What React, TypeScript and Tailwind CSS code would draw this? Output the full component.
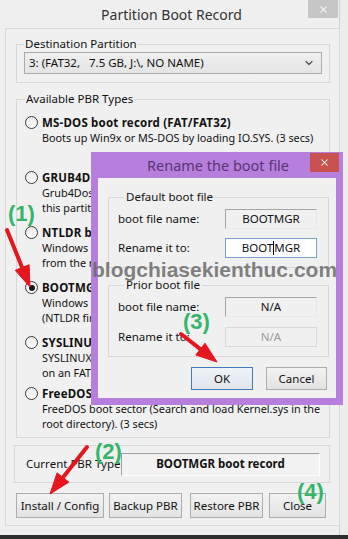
import { ChevronDown, X } from "lucide-react";

type Option = {
  title: string;
  lines: string[];
  checked?: boolean;
  h: string;
};

const options: Option[] = [
  { title: "MS-DOS boot record (FAT/FAT32)", lines: ["Boots up Win9x or MS-DOS by loading IO.SYS. (3 secs)"], h: "h-[55px]" },
  { title: "GRUB4DOS 0.4.5c/0.4.6a (grldr.mbr)", lines: ["Grub4Dos boot sector, search and load GRLDR from", "this partition. (3 secs)"], h: "h-[55px]" },
  { title: "NTLDR boot record", lines: ["Windows 2000/XP/2003 boot sector, load NTLDR", "from the root directory. (3 secs)"], h: "h-[55px]" },
  { title: "BOOTMGR boot record", lines: ["Windows Vista/7/8 boot sector, load BOOTMGR", "(NTLDR first if exists). (3 secs)"], checked: true, h: "h-[55px]" },
  { title: "SYSLINUX 4.07", lines: ["SYSLINUX boot sector, search and load ldlinux.sys", "on an FAT/NTFS partition. (3 secs)"], h: "h-[51px]" },
  { title: "FreeDOS boot record", lines: ["FreeDOS boot sector (Search and load Kernel.sys in the", "root directory). (3 secs)"], h: "h-[42px]" },
];

function Radio({ checked }: { checked?: boolean }) {
  return (
    <div className="w-[13px] h-[13px] mt-[1px] shrink-0 rounded-full border border-[#3a3a3a] bg-gradient-to-b from-[#e9e9e9] to-white flex items-center justify-center">
      {checked && <div className="w-[6px] h-[6px] rounded-full bg-[#1a1a1a]" />}
    </div>
  );
}

function PbrOption({ opt }: { opt: Option }) {
  return (
    <div className={`flex gap-[4px] ${opt.h}`}>
      <Radio checked={opt.checked} />
      <div className="whitespace-nowrap">
        <div className="font-bold text-[11.5px] leading-[15px] tracking-[0.2px]">{opt.title}</div>
        {opt.lines.map((l) => (
          <div key={l} className="text-[10.8px] leading-[13.5px] mt-[1px]">
            {l}
          </div>
        ))}
      </div>
    </div>
  );
}

function WinButton({ label, className = "" }: { label: string; className?: string }) {
  return (
    <div
      className={`h-[25px] flex items-center justify-center border border-[#adadad] bg-gradient-to-b from-[#f2f2f2] to-[#e3e3e3] text-[11.5px] ${className}`}
    >
      {label}
    </div>
  );
}

function ReadBox({ text, dim }: { text: string; dim?: boolean }) {
  return (
    <div
      className={`w-[92px] h-[20px] flex items-center justify-center border ${
        dim
          ? "border-[#d9d9d9] text-[#9a9a9a]"
          : "border-t-[#a5a5a5] border-l-[#a5a5a5] border-r-[#e8e8e8] border-b-[#e8e8e8]"
      }`}
    >
      {text}
    </div>
  );
}

function Arrow({ x1, y1, x2, y2 }: { x1: number; y1: number; x2: number; y2: number }) {
  const len = Math.hypot(x2 - x1, y2 - y1);
  const ux = (x2 - x1) / len;
  const uy = (y2 - y1) / len;
  const head = 21;
  const half = 7.5;
  const bx = x2 - ux * head;
  const by = y2 - uy * head;
  const pts = `${x2},${y2} ${bx - uy * half},${by + ux * half} ${bx + uy * half},${by - ux * half}`;
  return (
    <g fill="#e5161e" stroke="#e5161e">
      <line x1={x1} y1={y1} x2={bx + ux * 2} y2={by + uy * 2} strokeWidth={4} strokeLinecap="round" />
      <polygon points={pts} strokeWidth={1} strokeLinejoin="round" />
    </g>
  );
}

export default function App() {
  return (
    <div className="relative w-[348px] h-[539px] overflow-hidden bg-[#ececec] text-[#111] font-['Noto_Sans',sans-serif]">
      {/* main window */}
      <div className="w-[340px] h-[535px] border-r border-[#d2d2d2] bg-[#efefef] flex flex-col">
        <div className="relative h-[28px] shrink-0 flex items-center justify-center">
          <span className="text-[14px] text-[#333] pl-[4px] pt-[1px]">Partition Boot Record</span>
          <div className="absolute right-[1px] top-0 w-[30px] h-[18px] bg-[#c6c6c6] flex items-center justify-center">
            <X size={11} strokeWidth={2.2} className="text-white" />
          </div>
        </div>

        <div className="ml-[5px] w-[335px] h-[498px] border border-[#dadada] bg-[#f0f0f0] text-[11.5px]">
          <fieldset className="ml-[10px] mt-[7px] w-[314px] border border-[#d7d7d7] px-[7px] pb-[8px]">
            <legend className="leading-[16px] px-[1px]">Destination Partition</legend>
            <div className="h-[22px] border border-[#acacac] bg-gradient-to-b from-[#efefef] to-[#e4e4e4] flex items-center justify-between pl-[4px] pr-[6px]">
              <span className="whitespace-pre">3: (FAT32,   7.5 GB, J:\, NO NAME)</span>
              <ChevronDown size={12} strokeWidth={2.6} className="text-[#555]" />
            </div>
          </fieldset>

          <fieldset className="ml-[10px] mt-[8px] w-[314px] border border-[#d7d7d7] pl-[8px] pt-[8px] pb-[9px]">
            <legend className="leading-[16px] px-[1px]">Available PBR Types</legend>
            {options.map((o) => (
              <PbrOption key={o.title} opt={o} />
            ))}
          </fieldset>

          <fieldset className="ml-[8px] mt-[7px] w-[316px] h-[38px] border border-[#d7d7d7] flex items-center pl-[11px] pr-[9px]">
            <div className="flex items-center w-full">
              <span className="w-[95px] shrink-0 whitespace-nowrap">Current PBR Type:</span>
              <div className="flex-1 h-[23px] flex items-center justify-center font-bold border border-t-[#a0a0a0] border-l-[#a0a0a0] border-r-white border-b-white bg-[#f2f2f2]">
                BOOTMGR boot record
              </div>
            </div>
          </fieldset>

          <div className="flex mt-[10px] ml-[10px]">
            <WinButton label="Install / Config" className="w-[88px]" />
            <WinButton label="Backup PBR" className="w-[73px] ml-[5px]" />
            <WinButton label="Restore PBR" className="w-[73px] ml-[8px]" />
            <WinButton label="Close" className="w-[57px] ml-[6px]" />
          </div>
        </div>
      </div>
      <div className="h-[4px] bg-[#2e2e2e]" />

      {/* rename dialog */}
      <div className="absolute left-[91px] top-[152px] w-[252px] h-[253px] bg-[#b67fdd] flex flex-col">
        <div className="relative h-[26px] shrink-0 flex items-center justify-center">
          <span className="text-[14.5px] text-[#5a3473] pt-[1px] pl-[2px]">Rename the boot file</span>
          <div className="absolute right-[4px] top-[1px] w-[29px] h-[19px] bg-[#c9514f] flex items-center justify-center">
            <X size={11} strokeWidth={2.2} className="text-white" />
          </div>
        </div>
        <div className="mx-[7px] mb-[7px] flex-1 bg-[#f0f0f0] flex flex-col text-[11.5px]">
          <fieldset className="ml-[10px] mt-[11px] w-[221px] border border-[#d7d7d7] pl-[9px] pt-[4px] pb-[9px]">
            <legend className="leading-[16px] ml-[6px] px-[2px]">Default boot file</legend>
            <div className="flex items-center h-[20px]">
              <span className="w-[107px]">boot file name:</span>
              <ReadBox text="BOOTMGR" />
            </div>
            <div className="flex items-center h-[20px] mt-[9px]">
              <span className="w-[107px]">Rename it to:</span>
              <div className="w-[92px] h-[20px] flex items-center justify-center bg-white border border-[#7aa0cf]">
                BOOT<span className="inline-block w-[1px] h-[14px] bg-black" />MGR
              </div>
            </div>
          </fieldset>

          <fieldset className="ml-[10px] mt-[9px] w-[221px] border border-[#d7d7d7] pl-[9px] pt-[4px] pb-[9px]">
            <legend className="leading-[16px] ml-[6px] px-[2px]">Prior boot file</legend>
            <div className="flex items-center h-[20px]">
              <span className="w-[107px]">boot file name:</span>
              <ReadBox text="N/A" />
            </div>
            <div className="flex items-center h-[20px] mt-[10px]">
              <span className="w-[107px]">Rename it to:</span>
              <ReadBox text="N/A" dim />
            </div>
          </fieldset>

          <div className="flex justify-end gap-[13px] pr-[9px] mt-[10px]">
            <div className="w-[62px] h-[23px] flex items-center justify-center border border-[#3d7bbf] bg-gradient-to-b from-[#eef3f8] to-[#e0e6ec]">
              OK
            </div>
            <div className="w-[61px] h-[23px] flex items-center justify-center border border-[#adadad] bg-gradient-to-b from-[#f2f2f2] to-[#e3e3e3]">
              Cancel
            </div>
          </div>
        </div>
      </div>

      {/* watermark */}
      <div className="absolute left-[92px] top-[257px] text-[21px] leading-[26px] font-bold text-[#6b6b6b]/85 font-['Liberation_Sans',sans-serif]">
        blogchiasekienthuc.com
      </div>

      {/* step labels */}
      <div className="absolute left-[8px] top-[201px] text-[22px] leading-[26px] font-bold text-[#34b56a] font-['Liberation_Sans',sans-serif]">(1)</div>
      <div className="absolute left-[95px] top-[439px] text-[22px] leading-[26px] font-bold text-[#34b56a] font-['Liberation_Sans',sans-serif]">(2)</div>
      <div className="absolute left-[183px] top-[309px] text-[22px] leading-[26px] font-bold text-[#34b56a] font-['Liberation_Sans',sans-serif]">(3)</div>
      <div className="absolute left-[297px] top-[479px] text-[22px] leading-[26px] font-bold text-[#34b56a] font-['Liberation_Sans',sans-serif]">(4)</div>

      <svg className="absolute inset-0 pointer-events-none" width={348} height={539}>
        <Arrow x1={7} y1={230} x2={30} y2={287} />
        <Arrow x1={87} y1={447} x2={50} y2={494} />
        <Arrow x1={181} y1={334} x2={217} y2={362} />
      </svg>
    </div>
  );
}
